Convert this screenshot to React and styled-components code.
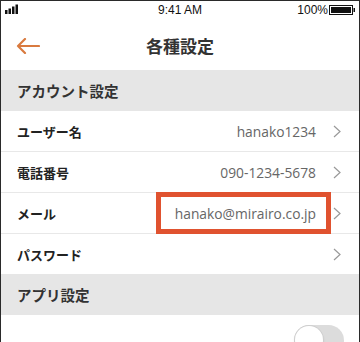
import React from 'react';
import styled, { createGlobalStyle } from 'styled-components';

const GlobalStyle = createGlobalStyle`
  html, body {
    margin: 0;
    padding: 0;
    background: #fff;
  }
  * { box-sizing: border-box; }
`;

const Frame = styled.div`
  width: 360px;
  height: 342px;
  overflow: hidden;
  background: #fff;
  border: 1px solid #2a2a2a;
  border-bottom: none;
  font-family: "Open Sans", "Noto Sans CJK JP", sans-serif;
`;

const StatusBar = styled.div`
  height: 17px;
  display: grid;
  grid-template-columns: 1fr auto 1fr;
  align-items: center;
  padding: 0 3px;
  font-family: "Liberation Sans", Arial, sans-serif;
  font-size: 12px;
  color: #111;
`;

const StatusRight = styled.div`
  display: flex;
  align-items: center;
  justify-content: flex-end;
  gap: 1px;
`;

const NavBar = styled.div`
  height: 52px;
  display: grid;
  grid-template-columns: 60px 1fr 60px;
  align-items: center;
`;

const BackButton = styled.div`
  display: flex;
  align-items: center;
  padding-left: 15px;
  padding-top: 3px;
`;

const Title = styled.h1`
  margin: 0;
  text-align: center;
  font-family: "Noto Sans CJK JP", sans-serif;
  font-size: 17px;
  font-weight: 700;
  color: #333;
  padding-top: 3px;
`;

const SectionHeader = styled.div`
  height: 41px;
  background: #e6e6e6;
  display: flex;
  align-items: center;
  padding-left: 16px;
  font-family: "Noto Sans CJK JP", sans-serif;
  font-size: 14.5px;
  font-weight: 700;
  color: #333;
`;

const Row = styled.div`
  position: relative;
  height: ${p => p.$h || 41}px;
  display: flex;
  align-items: ${p => p.$top ? 'flex-start' : 'center'};
  padding: ${p => p.$top ? '10px 15px 0 16px' : '0 18px 0 16px'};
  border-bottom: ${p => p.$last ? 'none' : '1px solid #e8e8e8'};
`;

const Label = styled.span`
  flex: 1;
  font-family: "Noto Sans CJK JP", sans-serif;
  font-size: 13px;
  font-weight: 700;
  color: #222;
  padding-top: ${p => p.$offset || 0}px;
`;

const Value = styled.span`
  font-family: "Open Sans", sans-serif;
  font-size: 13.8px;
  color: #666;
  margin-right: 17px;
`;

const Chevron = styled.svg`
  width: 8px;
  height: 13px;
  flex: none;
`;

const Highlight = styled.div`
  position: absolute;
  left: 155px;
  right: 28px;
  top: -1px;
  bottom: -1px;
  border: 5px solid #e0522f;
  pointer-events: none;
`;

const Toggle = styled.div`
  width: 50px;
  height: 31px;
  border-radius: 16px;
  background: #dcdcdc;
  position: relative;
  &::after {
    content: '';
    position: absolute;
    left: 1px;
    top: 1px;
    width: 28px;
    height: 28px;
    border-radius: 50%;
    background: #fff;
    box-shadow: 0 0 0 1px #cfcfcf, 0 2px 3px rgba(0,0,0,0.15);
  }
`;

const ChevronIcon = () => (
  <Chevron viewBox="0 0 8 13">
    <path d="M1 1 L7 6.5 L1 12" fill="none" stroke="#999" strokeWidth="1.2" />
  </Chevron>
);

const Signal = () => (
  <svg width="16" height="10" viewBox="0 0 16 10">
    <rect x="1" y="6" width="2.5" height="4" fill="#111" />
    <rect x="4.5" y="4.5" width="2.5" height="5.5" fill="#111" />
    <rect x="8" y="2.5" width="2.5" height="7.5" fill="#111" />
    <rect x="11.5" y="0.5" width="2.5" height="9.5" fill="#111" />
  </svg>
);

const Battery = () => (
  <svg width="27" height="10" viewBox="0 0 27 10">
    <rect x="0.5" y="0.5" width="23" height="9" fill="none" stroke="#111" />
    <rect x="2" y="2" width="20" height="6" fill="#111" />
    <rect x="24.5" y="3" width="1.5" height="4" fill="#111" />
  </svg>
);

const BackArrow = () => (
  <svg width="24" height="16" viewBox="0 0 24 16">
    <path d="M23 8 H2 M9 1 L2 8 L9 15" fill="none" stroke="#d97a3f" strokeWidth="2.2" strokeLinecap="round" strokeLinejoin="round" />
  </svg>
);

const accountRows = [
  { label: 'ユーザー名', value: 'hanako1234' },
  { label: '電話番号', value: '090-1234-5678' },
  { label: 'メール', value: 'hanako@mirairo.co.jp', mark: true },
  { label: 'パスワード', value: '' },
];

export default function App() {
  return (
    <>
      <GlobalStyle />
      <Frame>
        <StatusBar>
          <div><Signal /></div>
          <span>9:41 AM</span>
          <StatusRight>
            <span>100%</span>
            <Battery />
          </StatusRight>
        </StatusBar>
        <NavBar>
          <BackButton><BackArrow /></BackButton>
          <Title>各種設定</Title>
          <div />
        </NavBar>
        <SectionHeader>アカウント設定</SectionHeader>
        {accountRows.map((r, i) => {
          const last = i === accountRows.length - 1;
          return (
            <Row key={r.label} $last={last} $h={last ? 40 : 41}>
              <Label>{r.label}</Label>
              {r.value && <Value>{r.value}</Value>}
              <ChevronIcon />
              {r.mark && <Highlight />}
            </Row>
          );
        })}
        <SectionHeader>アプリ設定</SectionHeader>
        <Row $top $h={60} $last>
          <Label $offset={13}>パスコード</Label>
          <Toggle />
        </Row>
      </Frame>
    </>
  );
}
